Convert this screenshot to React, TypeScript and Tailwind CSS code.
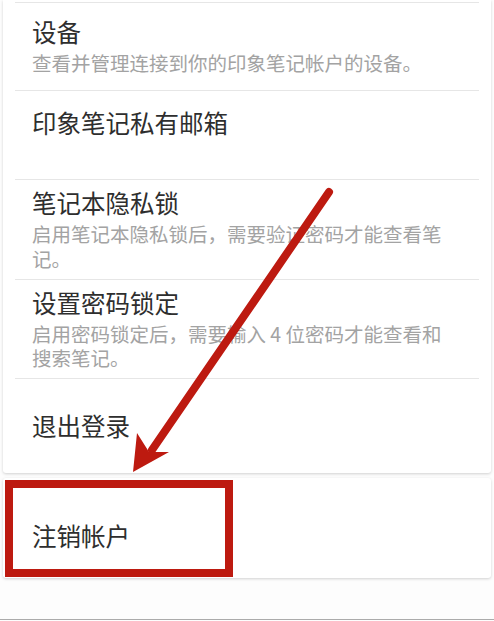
import React from 'react';

type Row = { title: string; desc?: string; h: string; top?: boolean };

const rows: Row[] = [
  { title: '设备', desc: '查看并管理连接到你的印象笔记帐户的设备。', h: 'h-[87px]' },
  { title: '印象笔记私有邮箱', h: 'h-[88px]', top: true },
  { title: '笔记本隐私锁', desc: '启用笔记本隐私锁后，需要验证密码才能查看笔记。', h: 'h-[99px]' },
  { title: '设置密码锁定', desc: '启用密码锁定后，需要输入 4 位密码才能查看和搜索笔记。', h: 'h-[98px]' },
  { title: '退出登录', h: 'h-[94px]' },
];

const font = { fontFamily: '"Noto Sans CJK SC", "Noto Sans", sans-serif' };

const SettingRow = ({ row }: { row: Row }) => (
  <div>
    <div className="mx-3 h-px bg-[#e6e6e6]" />
    <div
      className={`${row.h} flex flex-col pl-[29px] pr-10 ${row.top ? 'justify-start pt-[17px]' : 'justify-center'}`}
    >
      <p className="text-[24.5px] leading-[30px] text-[#2e2e2e]">{row.title}</p>
      {row.desc && (
        <p className="mt-[4px] text-[19.5px] leading-[24.5px] text-[#a3a3a3]">{row.desc}</p>
      )}
    </div>
  </div>
);

export default function App() {
  return (
    <div className="relative flex h-[621px] w-[494px] flex-col overflow-hidden bg-[#fdfdfd]" style={font}>
      {/* 设置列表 */}
      <div className="mx-[3px] rounded-b-[3px] bg-white pt-[2px] shadow-[0_1px_3px_rgba(0,0,0,0.18)]">
        {rows.map((r) => (
          <SettingRow key={r.title} row={r} />
        ))}
      </div>

      {/* 注销 */}
      <div className="mx-[3px] mt-[5px] h-[100px] rounded-[3px] bg-white pl-[29px] pt-[43px] shadow-[0_1px_3px_rgba(0,0,0,0.18)]">
        <p className="text-[24.5px] leading-[30px] text-[#2e2e2e]">注销帐户</p>
      </div>

      <div className="mt-auto mb-px h-px bg-[#ababab]" />

      {/* 标注 */}
      <div className="absolute left-[5px] top-[480px] h-[97px] w-[228px] border-[8px] border-[#bd1a10]" />
      <svg className="absolute inset-0" width="494" height="621" viewBox="0 0 494 621">
        <line x1="329" y1="192" x2="152" y2="450" stroke="#bd1a10" strokeWidth="8" strokeLinecap="round" />
        <polygon points="133,472 137,433 149,452 169,452" fill="#bd1a10" />
      </svg>
    </div>
  );
}
